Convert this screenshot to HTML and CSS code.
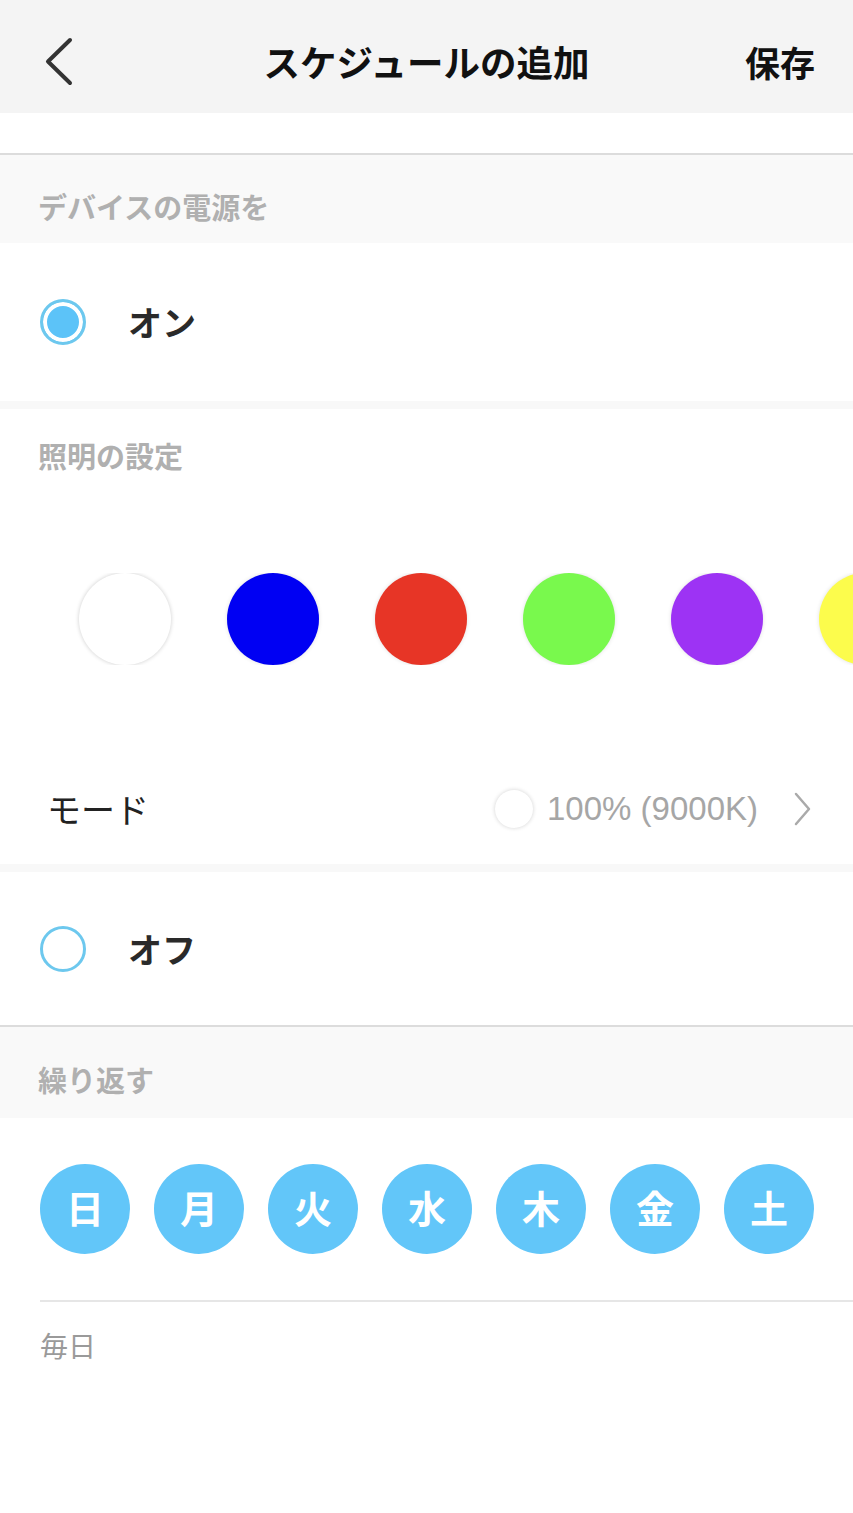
FILE: index.html
```html
<!DOCTYPE html>
<html lang="ja">
<head>
    <meta charset="UTF-8">
    <meta name="viewport" content="width=device-width, initial-scale=1.0">
    <title>スケジュールの追加</title>
    <link rel="stylesheet" href="styles.css">
</head>
<body>
    <header class="nav">
        <a class="nav-back" href="#">
            <svg width="30" height="50" viewBox="0 0 30 50">
                <polyline points="25,3 3,24.5 25,46" fill="none" stroke="#333" stroke-width="4" stroke-linecap="round" stroke-linejoin="round"/>
            </svg>
        </a>
        <h1 class="nav-title">スケジュールの追加</h1>
        <a class="nav-save" href="#">保存</a>
    </header>

    <div class="picker-edge"></div>

    <div class="section-title">デバイスの電源を</div>

    <div class="option">
        <span class="radio checked"></span>
        <span class="option-label">オン</span>
    </div>

    <div class="band"></div>

    <div class="light">
        <div class="light-title">照明の設定</div>
        <div class="swatches">
            <span class="swatch white"></span>
            <span class="swatch blue"></span>
            <span class="swatch red"></span>
            <span class="swatch green"></span>
            <span class="swatch purple"></span>
            <span class="swatch yellow"></span>
        </div>
        <div class="mode-row">
            <span class="mode-label">モード</span>
            <span class="mode-value">
                <span class="mode-dot"></span>
                <span class="mode-text">100% (9000K)</span>
                <svg class="chevron" width="18" height="34" viewBox="0 0 18 34">
                    <polyline points="3,2 16,17 3,32" fill="none" stroke="#aaa" stroke-width="2.5" stroke-linecap="round" stroke-linejoin="round"/>
                </svg>
            </span>
        </div>
    </div>

    <div class="band"></div>

    <div class="option option-off">
        <span class="radio"></span>
        <span class="option-label">オフ</span>
    </div>

    <div class="section-title repeat-title">繰り返す</div>

    <div class="repeat">
        <div class="days">
            <span class="day">日</span>
            <span class="day">月</span>
            <span class="day">火</span>
            <span class="day">水</span>
            <span class="day">木</span>
            <span class="day">金</span>
            <span class="day">土</span>
        </div>
        <div class="repeat-summary">毎日</div>
    </div>
</body>
</html>
```

FILE: styles.css
```css
body {
    margin: 0;
    background: #fff;
    font-family: "Noto Sans CJK JP", "Noto Sans", sans-serif;
    color: #222;
}
a {
    color: inherit;
    text-decoration: none;
}
.nav {
    height: 113px;
    box-sizing: border-box;
    padding: 10px 38px 0;
    background: #f4f4f4;
    display: grid;
    grid-template-columns: 1fr auto 1fr;
    align-items: center;
}
.nav-back {
    display: flex;
    align-items: center;
    margin-left: 7px;
}
.nav-title {
    margin: 0;
    font-size: 36.5px;
    line-height: 40px;
    font-weight: bold;
    color: #111;
}
.nav-save {
    justify-self: end;
    font-size: 35px;
    line-height: 40px;
    font-weight: bold;
    color: #111;
}
.picker-edge {
    height: 40px;
    border-bottom: 2px solid #dcdcdc;
}
.section-title {
    background: #f9f9f9;
    padding: 36px 38px 22px;
    font-size: 29px;
    line-height: 30px;
    font-weight: bold;
    color: #b0b0b0;
}
.repeat-title {
    padding-top: 37px;
    padding-bottom: 24px;
}
.option {
    height: 158px;
    box-sizing: border-box;
    padding-left: 40px;
    display: flex;
    align-items: center;
    gap: 42px;
}
.option-off {
    height: 155px;
    padding-top: 1px;
    border-bottom: 2px solid #dcdcdc;
}
.radio {
    width: 46px;
    height: 46px;
    box-sizing: border-box;
    border-radius: 50%;
    border: 3px solid #6dc8ee;
    background: #fff;
}
.radio.checked {
    background: #5cc3f8;
    box-shadow: inset 0 0 0 4px #fff;
}
.option-label {
    font-size: 34px;
    line-height: 40px;
    font-weight: bold;
    color: #2a2a2a;
}
.band {
    height: 8px;
    background: #f8f8f8;
}
.light-title {
    padding: 31px 38px 0;
    font-size: 29px;
    line-height: 30px;
    font-weight: bold;
    color: #b0b0b0;
}
.swatches {
    margin-top: 103px;
    padding-left: 79px;
    display: flex;
    gap: 56px;
    overflow: hidden;
}
.swatch {
    flex: none;
    width: 92px;
    height: 92px;
    border-radius: 50%;
    box-shadow: 0 0 4px rgba(0, 0, 0, 0.12);
}
.white { background: #fff; box-shadow: 0 0 4px rgba(0, 0, 0, 0.2); }
.blue { background: #0000f3; }
.red { background: #e73526; }
.green { background: #79f94d; }
.purple { background: #9d33f4; }
.yellow { background: #fcfc4c; }
.mode-row {
    margin-top: 89px;
    height: 110px;
    padding: 0 42px 0 47px;
    display: flex;
    align-items: center;
    justify-content: space-between;
}
.mode-label {
    font-size: 34px;
    line-height: 40px;
    color: #222;
}
.mode-value {
    display: flex;
    align-items: center;
}
.mode-dot {
    width: 38px;
    height: 38px;
    border-radius: 50%;
    background: #fff;
    box-shadow: 0 0 4px rgba(0, 0, 0, 0.18);
    margin-right: 14px;
}
.mode-text {
    font-family: "Liberation Sans", Arial, sans-serif;
    font-size: 33px;
    line-height: 40px;
    color: #a6a6a6;
    margin-right: 35px;
}
.repeat {
    padding-left: 40px;
}
.days {
    padding: 46px 0 46px;
    border-bottom: 2px solid #e6e6e6;
    display: flex;
    gap: 24px;
}
.day {
    width: 90px;
    height: 90px;
    box-sizing: border-box;
    padding-bottom: 5px;
    border-radius: 50%;
    background: #62c6f9;
    color: #fff;
    font-size: 38px;
    line-height: 40px;
    font-weight: bold;
    display: flex;
    align-items: center;
    justify-content: center;
}
.repeat-summary {
    padding-top: 28px;
    font-size: 28px;
    line-height: 30px;
    color: #9a9a9a;
}
```
